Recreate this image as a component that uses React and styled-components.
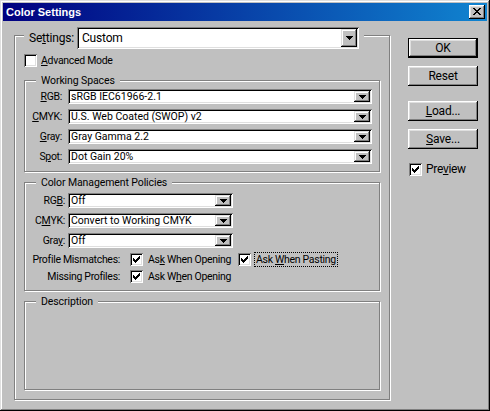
import React from 'react';
import styled, { createGlobalStyle } from 'styled-components';

const FONT = `Roboto, "Liberation Sans", Arial, sans-serif`;

const GlobalStyle = createGlobalStyle`
  html, body { margin: 0; padding: 0; background: #c0c0c0; }
  body { font-family: ${FONT}; font-size: 10.5px; letter-spacing: -0.3px; color: #000; }
  * { box-sizing: border-box; }
  u { text-decoration: underline; text-underline-offset: 1px; }
`;

const Window = styled.div`
  width: 490px;
  height: 411px;
  padding: 3px;
  display: flex;
  flex-direction: column;
  background: #c0c0c0;
  box-shadow: inset -1px -1px 0 #000, inset 1px 1px 0 #dfdfdf,
    inset -2px -2px 0 #808080, inset 2px 2px 0 #fff;
  font-family: ${FONT};
  font-size: 10.5px;
  letter-spacing: -0.3px;
`;

const TitleBar = styled.div`
  height: 18px;
  flex: none;
  display: flex;
  align-items: center;
  justify-content: space-between;
  padding: 0 2px 0 3px;
  background: linear-gradient(to right, #000080, #1084d0);
`;

const Title = styled.span`
  color: #fff;
  font-family: "Liberation Sans", Arial, sans-serif;
  font-weight: bold;
  font-size: 11px;
  letter-spacing: 0;
  line-height: 13px;
`;

const CloseButton = styled.button`
  width: 16px;
  height: 14px;
  padding: 3px 0 0 4px;
  border: 0;
  background: #c0c0c0;
  box-shadow: inset -1px -1px 0 #000, inset 1px 1px 0 #fff,
    inset -2px -2px 0 #808080, inset 2px 2px 0 #dfdfdf;
  display: flex;
  align-items: flex-start;
  justify-content: flex-start;
  svg { display: block; }
`;

const Body = styled.div`
  flex: 1;
  display: flex;
  align-items: stretch;
  gap: 18px;
  padding: 14px 9px 8px 11px;
`;

const GroupBox = styled.div`
  display: flex;
  flex-direction: column;
  align-items: stretch;
  border: 1px solid #808080;
  box-shadow: inset 1px 1px 0 #fff, 1px 1px 0 #fff;
  padding: ${(p) => p.$pad};
  margin-top: ${(p) => p.$mt || 0}px;
  width: ${(p) => (p.$w ? `${p.$w}px` : 'auto')};
  flex: ${(p) => (p.$grow ? 1 : 'none')};
`;

const Caption = styled.div`
  align-self: flex-start;
  display: flex;
  align-items: center;
  margin: ${(p) => p.$mt}px 0 0 ${(p) => p.$ml}px;
  padding: 0 5px;
  background: #c0c0c0;
  line-height: 13px;
  letter-spacing: -0.1px;
  white-space: nowrap;
`;

const SettingsLabel = styled.span`
  width: 48px;
  font-size: 12px;
  letter-spacing: -0.2px;
  line-height: 14px;
  white-space: nowrap;
`;

const Combo = styled.div`
  display: flex;
  align-items: stretch;
  width: ${(p) => (p.$w ? `${p.$w}px` : 'auto')};
  justify-self: ${(p) => (p.$w ? 'start' : 'stretch')};
  height: ${(p) => (p.$big ? 22 : 15)}px;
  padding: 2px;
  background: #fff;
  box-shadow: inset 1px 1px 0 #808080, inset -1px -1px 0 #fff,
    inset 2px 2px 0 #000, inset -2px -2px 0 #dfdfdf;
`;

const ComboText = styled.span`
  flex: 1;
  padding-left: ${(p) => (p.$big ? 3 : 1)}px;
  font-size: ${(p) => (p.$big ? 12 : 10.5)}px;
  letter-spacing: ${(p) => (p.$big ? -0.2 : 0)}px;
  line-height: ${(p) => (p.$big ? 18 : 11)}px;
  white-space: nowrap;
`;

const DropButton = styled.span`
  width: 16px;
  flex: none;
  background: #c0c0c0;
  box-shadow: inset -1px -1px 0 #000, inset 1px 1px 0 #dfdfdf,
    inset -2px -2px 0 #808080, inset 2px 2px 0 #fff;
  display: flex;
  align-items: center;
  justify-content: center;
  svg { display: block; }
`;

const CheckRow = styled.div`
  display: flex;
  align-items: center;
  gap: ${(p) => p.$gap || 4}px;
  height: 13px;
  margin-top: ${(p) => p.$mt || 0}px;
  margin-left: ${(p) => p.$ml || 0}px;
  font-size: ${(p) => p.$fs || 10.5}px;
  line-height: 13px;
  white-space: nowrap;
`;

const CheckBox = styled.span`
  width: 13px;
  height: 13px;
  flex: none;
  background: #fff;
  box-shadow: inset 1px 1px 0 #808080, inset -1px -1px 0 #fff,
    inset 2px 2px 0 #000, inset -2px -2px 0 #dfdfdf;
  display: flex;
  align-items: flex-start;
  svg { display: block; margin: 3px 0 0 3px; }
`;

const FieldGrid = styled.div`
  display: grid;
  grid-template-columns: ${(p) => p.$labelW}px 1fr;
  column-gap: ${(p) => p.$gap}px;
  row-gap: 5px;
  margin-top: ${(p) => p.$mt}px;
`;

const FieldLabel = styled.span`
  display: flex;
  justify-content: flex-end;
  align-items: center;
  white-space: nowrap;
  line-height: 13px;
`;

const CheckGrid = styled.div`
  display: grid;
  grid-template-columns: 86px 98px auto;
  column-gap: 10px;
  row-gap: 4px;
  margin-top: 5px;
`;

const FocusText = styled.span`
  margin-left: -2px;
  padding: 0 1px;
  border: 1px dotted #000;
  line-height: 13px;
`;

const ButtonColumn = styled.div`
  width: 70px;
  flex: none;
  display: flex;
  flex-direction: column;
  padding-top: 3px;
`;

const PushButton = styled.button`
  width: 70px;
  height: 20px;
  flex: none;
  margin-top: ${(p) => p.$mt || 0}px;
  padding: 0;
  border: 0;
  background: #c0c0c0;
  font-family: ${FONT};
  font-size: 12px;
  letter-spacing: -0.2px;
  color: #000;
  box-shadow: ${(p) =>
    p.$default
      ? 'inset 0 0 0 1px #000, inset -2px -2px 0 #000, inset 2px 2px 0 #fff, inset -3px -3px 0 #808080, inset 3px 3px 0 #dfdfdf'
      : 'inset -1px -1px 0 #000, inset 1px 1px 0 #fff, inset -2px -2px 0 #808080, inset 2px 2px 0 #dfdfdf'};
`;

const CHECK_PATH =
  'M0 2h1v3H0z M1 3h1v3H1z M2 4h1v3H2z M3 3h1v3H3z M4 2h1v3H4z M5 1h1v3H5z M6 0h1v3H6z';
const ARROW_PATH = 'M0 0h7v1H0z M1 1h5v1H1z M2 2h3v1H2z M3 3h1v1H3z';
const CLOSE_PATH =
  'M0 0h2v1H0z M6 0h2v1H6z M1 1h2v1H1z M5 1h2v1H5z M2 2h4v1H2z M3 3h2v1H3z M2 4h4v1H2z M1 5h2v1H1z M5 5h2v1H5z M0 6h2v1H0z M6 6h2v1H6z';

const Check = ({ checked }) => (
  <CheckBox>
    {checked && (
      <svg width="7" height="7" viewBox="0 0 7 7" shapeRendering="crispEdges">
        <path d={CHECK_PATH} fill="#000" />
      </svg>
    )}
  </CheckBox>
);

const Select = ({ value, big, w }) => (
  <Combo $big={big} $w={w}>
    <ComboText $big={big}>{value}</ComboText>
    <DropButton>
      <svg width="7" height="4" viewBox="0 0 7 4" shapeRendering="crispEdges">
        <path d={ARROW_PATH} fill="#000" />
      </svg>
    </DropButton>
  </Combo>
);

export default function App() {
  return (
    <>
      <GlobalStyle />
      <Window>
        <TitleBar>
          <Title>Color Settings</Title>
          <CloseButton aria-label="Close">
            <svg width="8" height="7" viewBox="0 0 8 7" shapeRendering="crispEdges">
              <path d={CLOSE_PATH} fill="#000" />
            </svg>
          </CloseButton>
        </TitleBar>
        <Body>
          <GroupBox $w={376} $pad="0 9px 9px 9px">
            <Caption $mt={-9} $ml={0}>
              <SettingsLabel>
                Se<u>t</u>tings:
              </SettingsLabel>
              <Select big w={282} value="Custom" />
            </Caption>
            <CheckRow $mt={5}>
              <Check />
              <span>
                <u>A</u>dvanced Mode
              </span>
            </CheckRow>

            <GroupBox $mt={13} $pad="0 7px 7px 9px">
              <Caption $mt={-7} $ml={2}>Working Spaces</Caption>
              <FieldGrid $labelW={28} $gap={6} $mt={2}>
                <FieldLabel>
                  <u>R</u>GB:
                </FieldLabel>
                <Select value="sRGB IEC61966-2.1" />
                <FieldLabel>
                  <u>C</u>MYK:
                </FieldLabel>
                <Select value="U.S. Web Coated (SWOP) v2" />
                <FieldLabel>
                  <u>G</u>ray:
                </FieldLabel>
                <Select value="Gray Gamma 2.2" />
                <FieldLabel>
                  S<u>p</u>ot:
                </FieldLabel>
                <Select value="Dot Gain 20%" />
              </FieldGrid>
            </GroupBox>

            <GroupBox $mt={10} $pad="0 7px 7px 9px">
              <Caption $mt={-7} $ml={2}>Color Management Policies</Caption>
              <FieldGrid $labelW={31} $gap={3} $mt={4}>
                <FieldLabel>
                  RG<u>B</u>:
                </FieldLabel>
                <Select w={165} value="Off" />
                <FieldLabel>
                  C<u>M</u>YK:
                </FieldLabel>
                <Select w={165} value="Convert to Working CMYK" />
                <FieldLabel>
                  Gra<u>y</u>:
                </FieldLabel>
                <Select w={165} value="Off" />
              </FieldGrid>
              <CheckGrid>
                <FieldLabel>Profile Mismatches:</FieldLabel>
                <CheckRow $gap={5}>
                  <Check checked />
                  <span>
                    As<u>k</u> When Opening
                  </span>
                </CheckRow>
                <CheckRow $gap={5}>
                  <Check checked />
                  <FocusText>
                    Ask <u>W</u>hen Pasting
                  </FocusText>
                </CheckRow>
                <FieldLabel>Missing Profiles:</FieldLabel>
                <CheckRow $gap={5}>
                  <Check checked />
                  <span>
                    Ask W<u>h</u>en Opening
                  </span>
                </CheckRow>
              </CheckGrid>
            </GroupBox>

            <GroupBox $mt={10} $grow $pad="0 7px 7px 9px">
              <Caption $mt={-7} $ml={2}>Description</Caption>
            </GroupBox>
          </GroupBox>

          <ButtonColumn>
            <PushButton $default>OK</PushButton>
            <PushButton $mt={8}>Reset</PushButton>
            <PushButton $mt={15}>
              <u>L</u>oad...
            </PushButton>
            <PushButton $mt={8}>
              <u>S</u>ave...
            </PushButton>
            <CheckRow $mt={14} $ml={1} $fs={12}>
              <Check checked />
              <span>
                Pre<u>v</u>iew
              </span>
            </CheckRow>
          </ButtonColumn>
        </Body>
      </Window>
    </>
  );
}
